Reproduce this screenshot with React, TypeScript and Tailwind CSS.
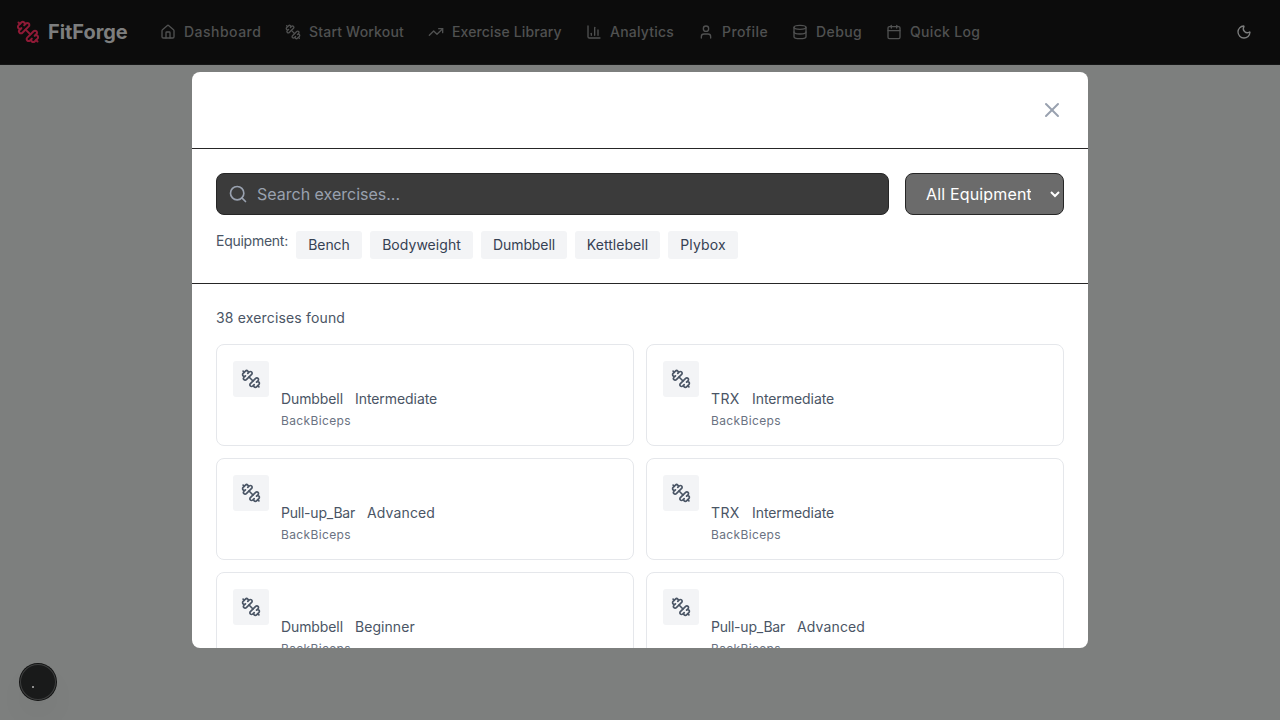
import {
  Calendar,
  ChartColumn,
  Database,
  House,
  Moon,
  Search,
  TrendingUp,
  User,
  X,
} from "lucide-react";
import type { ComponentType } from "react";

function Dumbbell({ className }: { className?: string }) {
  return (
    <svg
      viewBox="0 0 24 24"
      fill="none"
      stroke="currentColor"
      strokeWidth="2"
      strokeLinecap="round"
      strokeLinejoin="round"
      className={className}
    >
      <path d="M14.4 14.4 9.6 9.6" />
      <path d="M18.657 21.485a2 2 0 1 1-2.829-2.828l-1.767 1.768a2 2 0 1 1-2.829-2.829l6.364-6.364a2 2 0 1 1 2.829 2.829l-1.768 1.767a2 2 0 1 1 2.828 2.829z" />
      <path d="m21.5 21.5-1.4-1.4" />
      <path d="M3.9 3.9 2.5 2.5" />
      <path d="M6.404 12.768a2 2 0 1 1-2.829-2.829l1.768-1.767a2 2 0 1 1-2.828-2.829l2.828-2.828a2 2 0 1 1 2.829 2.828l1.767-1.768a2 2 0 1 1 2.829 2.829z" />
    </svg>
  );
}

const links: { label: string; icon: ComponentType<{ className?: string }>; fit: string }[] = [
  { label: "Dashboard", icon: House, fit: "w-[77px] tracking-[0.48px]" },
  { label: "Start Workout", icon: Dumbbell, fit: "w-[95px] tracking-[0.19px]" },
  { label: "Exercise Library", icon: TrendingUp, fit: "w-[110px] tracking-[0.14px]" },
  { label: "Analytics", icon: ChartColumn, fit: "w-[64px] tracking-[0.2px]" },
  { label: "Profile", icon: User, fit: "w-[46px] tracking-[0.42px]" },
  { label: "Debug", icon: Database, fit: "w-[46px] tracking-[0.4px]" },
  { label: "Quick Log", icon: Calendar, fit: "w-[70px] tracking-[0.32px]" },
];

const equipment = [
  { name: "Bench", fit: "w-[66px] tracking-[-0.06px]" },
  { name: "Bodyweight", fit: "w-[103px] tracking-[0.04px]" },
  { name: "Dumbbell", fit: "w-[86px] tracking-[-0.1px]" },
  { name: "Kettlebell", fit: "w-[85px] tracking-[0.04px]" },
  { name: "Plybox", fit: "w-[70px] tracking-[0.13px]" },
];

const wordFit: Record<string, string> = {
  Dumbbell: "w-[62px] tracking-[-0.1px]",
  TRX: "w-[29px] tracking-[0.4px]",
  "Pull-up_Bar": "w-[74px] tracking-[-0.22px]",
  Intermediate: "tracking-[-0.07px]",
  Advanced: "tracking-[0.13px]",
  Beginner: "tracking-[0.06px]",
};

const exercises = [
  { equipment: "Dumbbell", level: "Intermediate", muscles: ["Back", "Biceps"] },
  { equipment: "TRX", level: "Intermediate", muscles: ["Back", "Biceps"] },
  { equipment: "Pull-up_Bar", level: "Advanced", muscles: ["Back", "Biceps"] },
  { equipment: "TRX", level: "Intermediate", muscles: ["Back", "Biceps"] },
  { equipment: "Dumbbell", level: "Beginner", muscles: ["Back", "Biceps"] },
  { equipment: "Pull-up_Bar", level: "Advanced", muscles: ["Back", "Biceps"] },
];

function NavBar() {
  return (
    <nav className="flex h-[65px] items-center border-b border-[#151616] bg-[#0c0c0c] px-4">
      <div className="flex items-center gap-2">
        <Dumbbell className="size-6 text-[#8f1a36]" />
        <span className="w-20 text-xl font-bold tracking-[-0.06px] text-[#7d7e7e]">FitForge</span>
      </div>
      <div className="ml-8 flex items-center gap-6">
        {links.map(({ label, icon: Icon, fit }) => (
          <a key={label} className="flex items-center gap-2 text-sm font-medium text-[#505151]">
            <Icon className="size-4" />
            <span className={`whitespace-nowrap ${fit}`}>{label}</span>
          </a>
        ))}
      </div>
      <button className="ml-auto flex size-10 items-center justify-center text-[#7d7e7e]">
        <Moon className="size-4" />
      </button>
    </nav>
  );
}

function ExerciseCard({ item }: { item: (typeof exercises)[number] }) {
  return (
    <div className="flex items-start gap-3 rounded-lg border border-gray-200 p-4">
      <div className="rounded-[3px] bg-gray-100 p-2 text-gray-600">
        <Dumbbell className="size-5" />
      </div>
      <div className="flex flex-col gap-1">
        <div className="h-6" />
        <div className="flex gap-3 text-sm text-gray-600">
          <span className={`whitespace-nowrap ${wordFit[item.equipment]}`}>{item.equipment}</span>
          <span className={wordFit[item.level]}>{item.level}</span>
        </div>
        <div className="text-xs tracking-[0.36px] text-gray-500">
          {item.muscles.map((m) => (
            <span key={m}>{m}</span>
          ))}
        </div>
      </div>
    </div>
  );
}

function ExerciseDialog() {
  return (
    <div className="flex h-[576px] w-[896px] flex-col overflow-hidden rounded-lg bg-white">
      <div className="flex h-[77px] shrink-0 items-center justify-end border-b border-[#262626] px-6">
        <button className="text-gray-400">
          <X className="size-6" />
        </button>
      </div>
      <div className="shrink-0 border-b border-[#262626] p-6">
        <div className="flex gap-4">
          <div className="flex h-[42px] flex-1 items-center gap-[9px] rounded-lg border border-[#262626] bg-[#3b3b3b] px-[11px]">
            <Search className="size-5 text-gray-400" />
            <input
              className="min-w-0 flex-1 bg-transparent text-base text-white outline-none placeholder:text-gray-400"
              placeholder="Search exercises..."
            />
          </div>
          <select className="h-[42px] w-[159px] rounded-lg border border-[#262626] bg-[#6b6b6b] px-4 text-base tracking-[0.16px] text-white">
            <option>All Equipment</option>
          </select>
        </div>
        <div className="mt-4 flex gap-2 text-sm">
          <span className="w-[72px] whitespace-nowrap tracking-[-0.26px] text-gray-600">Equipment:</span>
          {equipment.map(({ name, fit }) => (
            <button key={name} className={`rounded-[3px] bg-gray-100 py-1 text-gray-700 ${fit}`}>
              {name}
            </button>
          ))}
        </div>
      </div>
      <div className="min-h-0 flex-1 overflow-hidden p-6">
        <p className="mb-4 text-sm tracking-[0.16px] text-gray-600">38 exercises found</p>
        <div className="grid grid-cols-2 gap-3">
          {exercises.map((item, i) => (
            <ExerciseCard key={i} item={item} />
          ))}
        </div>
      </div>
    </div>
  );
}

export default function App() {
  return (
    <div className="relative flex h-[720px] w-[1280px] flex-col overflow-hidden bg-[#7d7f7e] font-['Inter',sans-serif]">
      <NavBar />
      <main className="flex justify-center pt-[7px]">
        <ExerciseDialog />
      </main>
      <button className="absolute bottom-5 left-5 flex size-9 rounded-full bg-[#191a1a] shadow-[0_0_0_1px_#101111,inset_0_0_0_1px_#3d3e3e,0_16px_32px_-8px_rgba(0,0,0,0.12)]">
        <span className="mt-[22px] ml-3 size-0.5 bg-[#8c8c8c]" />
      </button>
    </div>
  );
}
